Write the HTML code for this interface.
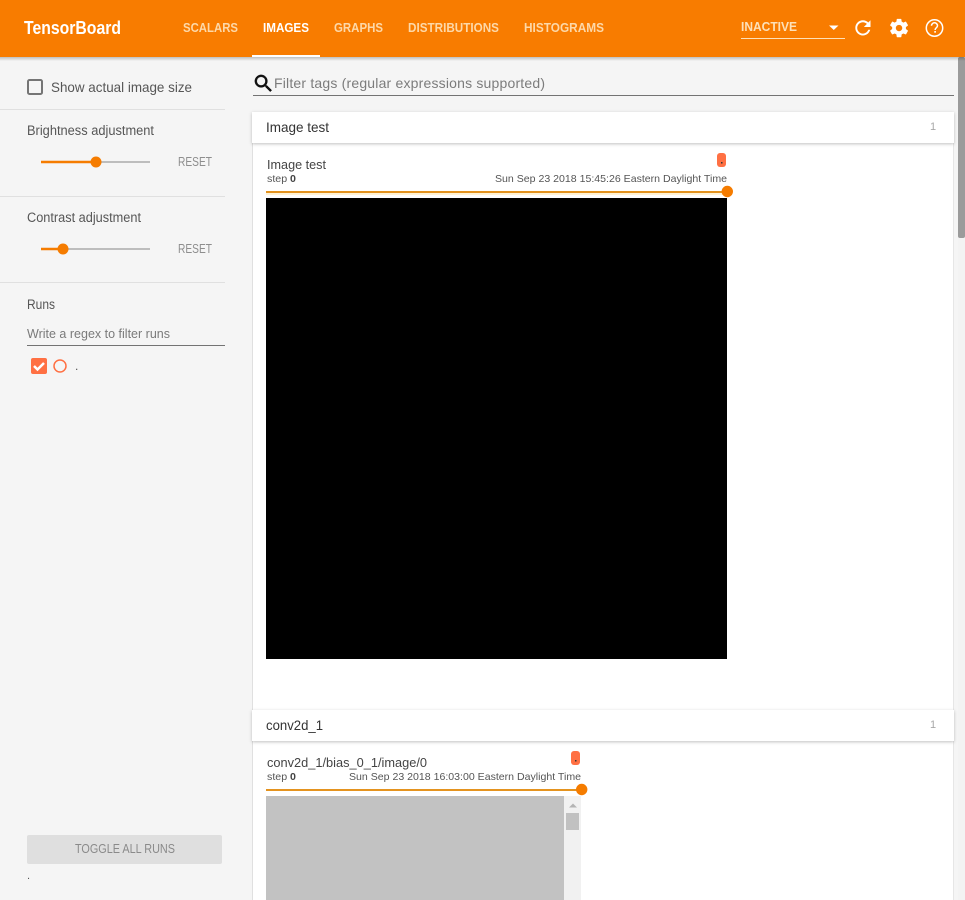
<!DOCTYPE html>
<html lang="en">
<head>
<meta charset="utf-8">
<title>TensorBoard</title>
<style>
html,body{margin:0;padding:0;width:965px;height:900px;overflow:hidden;background:#f5f5f5}
svg{display:block;position:absolute;left:0;top:0}
text{font-family:"Liberation Sans",sans-serif;white-space:pre}
.tab{font-size:13px;font-weight:bold;fill:#fdd8a8}
.lbl{font-size:13.500px;fill:#565656}
.rst{font-size:12.500px;fill:#8e8e8e}
.t{font-size:13px;fill:#444}
.s{font-size:10.500px;fill:#555}
</style>
</head>
<body>
<svg width="965" height="900" viewBox="0 0 965 900" xmlns="http://www.w3.org/2000/svg">
<defs>
<linearGradient id="hs" x1="0" y1="0" x2="0" y2="1"><stop offset="0" stop-color="#000" stop-opacity=".22"/><stop offset="1" stop-color="#000" stop-opacity="0"/></linearGradient>
<filter id="sh" x="-5%" y="-30%" width="110%" height="170%"><feDropShadow dx="0" dy="1" stdDeviation="1.500" flood-color="#000" flood-opacity=".25"/></filter>
</defs>

<rect width="965" height="900" fill="#f5f5f5"/>

<!-- main column -->
<rect x="252" y="143" width="702" height="757" fill="#fff"/>
<rect x="252" y="143" width="1" height="757" fill="#e0e0e0"/>
<rect x="953" y="143" width="1" height="757" fill="#e6e6e6"/>

<!-- page scrollbar -->
<rect x="958" y="57" width="7" height="843" fill="#f3f3f3"/>
<rect x="958" y="57" width="7" height="181" rx="2" fill="#9b9b9b"/>

<!-- header -->
<rect x="0" y="57" width="965" height="4" fill="url(#hs)"/>
<rect width="965" height="57" fill="#f87c00"/>
<text x="24" y="34" font-size="18" font-weight="bold" fill="#fff" textLength="97" lengthAdjust="spacingAndGlyphs">TensorBoard</text>
<text class="tab" x="183" y="32" textLength="55" lengthAdjust="spacingAndGlyphs">SCALARS</text>
<text class="tab" x="263" y="32" textLength="46" lengthAdjust="spacingAndGlyphs" style="fill:#fff">IMAGES</text>
<text class="tab" x="334" y="32" textLength="49" lengthAdjust="spacingAndGlyphs">GRAPHS</text>
<text class="tab" x="408" y="32" textLength="91" lengthAdjust="spacingAndGlyphs">DISTRIBUTIONS</text>
<text class="tab" x="524" y="32" textLength="80" lengthAdjust="spacingAndGlyphs">HISTOGRAMS</text>
<rect x="252" y="55" width="68" height="2" fill="#fff"/>
<text x="741" y="31" font-size="13" font-weight="bold" fill="#fde0b8" textLength="56" lengthAdjust="spacingAndGlyphs">INACTIVE</text>
<path d="M829 25.500h9.500l-4.750 4.500z" fill="#fff"/>
<rect x="741" y="38" width="104" height="1" fill="#fde0b8"/>
<g fill="#fff">
<path transform="translate(851.500 16.500) scale(.95)" d="M17.65 6.35C16.2 4.9 14.21 4 12 4c-4.42 0-7.99 3.58-7.99 8s3.57 8 7.99 8c3.73 0 6.84-2.55 7.73-6h-2.08c-.82 2.33-3.04 4-5.65 4-3.31 0-6-2.69-6-6s2.69-6 6-6c1.66 0 3.14.69 4.22 1.78L13 11h7V4l-2.35 2.35z"/>
<path transform="translate(888 17) scale(.92)" d="M19.43 12.98c.04-.32.07-.64.07-.98s-.03-.66-.07-.98l2.11-1.65c.19-.15.24-.42.12-.64l-2-3.46c-.12-.22-.39-.3-.61-.22l-2.49 1c-.52-.4-1.08-.73-1.69-.98l-.38-2.65C14.46 2.18 14.25 2 14 2h-4c-.25 0-.46.18-.49.42l-.38 2.65c-.61.25-1.17.59-1.69.98l-2.49-1c-.23-.09-.49 0-.61.22l-2 3.46c-.13.22-.07.49.12.64l2.11 1.65c-.04.32-.07.65-.07.98s.03.66.07.98l-2.11 1.65c-.19.15-.24.42-.12.64l2 3.46c.12.22.39.3.61.22l2.49-1c.52.4 1.08.73 1.69.98l.38 2.65c.03.24.24.42.49.42h4c.25 0 .46-.18.49-.42l.38-2.65c.61-.25 1.17-.59 1.69-.98l2.49 1c.23.09.49 0 .61-.22l2-3.46c.12-.22.07-.49-.12-.64l-2.11-1.65zM12 15.5c-1.93 0-3.5-1.57-3.5-3.5s1.57-3.5 3.5-3.5 3.5 1.57 3.5 3.5-1.57 3.5-3.5 3.5z"/>
</g>
<!-- help icon: thin ring and question mark -->
<circle cx="934.500" cy="28" r="8.200" fill="none" stroke="#fff" stroke-width="1.500"/>
<path d="M931.500 25.800a3 3 0 0 1 6 0c0 1.900-2.400 1.900-2.400 4.200" fill="none" stroke="#fff" stroke-width="1.500"/>
<rect x="934.300" y="31" width="1.600" height="1.700" fill="#fff"/>

<!-- sidebar -->
<rect x="28" y="80" width="14" height="14" rx="1.500" fill="none" stroke="#757575" stroke-width="2"/>
<text class="lbl" x="51" y="92" textLength="141" lengthAdjust="spacingAndGlyphs" style="font-size:14px">Show actual image size</text>
<rect x="0" y="109" width="225" height="1" fill="#e0e0e0"/>
<text class="lbl" x="27" y="135" textLength="127" lengthAdjust="spacingAndGlyphs">Brightness adjustment</text>
<rect x="41" y="161" width="109" height="2" fill="#bdbdbd"/>
<rect x="41" y="160.750" width="55" height="2.500" fill="#f57c00"/>
<circle cx="96" cy="162" r="5.500" fill="#f57c00"/>
<text class="rst" x="178" y="166" textLength="34" lengthAdjust="spacingAndGlyphs">RESET</text>
<rect x="0" y="196" width="225" height="1" fill="#e0e0e0"/>
<text class="lbl" x="27" y="222" textLength="114" lengthAdjust="spacingAndGlyphs">Contrast adjustment</text>
<rect x="41" y="248" width="109" height="2" fill="#bdbdbd"/>
<rect x="41" y="247.750" width="22" height="2.500" fill="#f57c00"/>
<circle cx="63" cy="249" r="5.500" fill="#f57c00"/>
<text class="rst" x="178" y="253" textLength="34" lengthAdjust="spacingAndGlyphs">RESET</text>
<rect x="0" y="282" width="225" height="1" fill="#e0e0e0"/>
<text class="lbl" x="27" y="309" textLength="28" lengthAdjust="spacingAndGlyphs" style="font-size:14px">Runs</text>
<text x="27" y="338" font-size="13" fill="#7a7a7a" textLength="143" lengthAdjust="spacingAndGlyphs">Write a regex to filter runs</text>
<rect x="27" y="345" width="198" height="1" fill="#737373"/>
<rect x="31" y="358" width="16" height="16" rx="2" fill="#ff7043"/>
<path d="M34 366l3.500 3.500 6.500-6.500" fill="none" stroke="#fff" stroke-width="2.500"/>
<circle cx="60" cy="366" r="6" fill="none" stroke="#ff7043" stroke-width="1.500"/>
<text x="75" y="370" font-size="12" fill="#555">.</text>
<rect x="27" y="835" width="195" height="29" rx="2" fill="#dfdfdf"/>
<text x="75" y="853" font-size="12.500" fill="#8a8a8a" textLength="100" lengthAdjust="spacingAndGlyphs">TOGGLE ALL RUNS</text>
<text x="27" y="879" font-size="11" fill="#555">.</text>

<!-- filter -->
<path transform="translate(252 72) scale(.96)" stroke="#111" stroke-width=".5" d="M15.500 14h-.79l-.28-.27C15.410 12.590 16 11.110 16 9.500 16 5.910 13.090 3 9.500 3S3 5.910 3 9.500 5.910 16 9.500 16c1.610 0 3.090-.59 4.230-1.570l.27.28v.79l5 4.990L20.490 19l-4.990-5zm-6 0C7.010 14 5 11.990 5 9.500S7.010 5 9.500 5 14 7.010 14 9.500 11.990 14 9.500 14z" fill="#111"/>
<text x="274" y="88" font-size="14" fill="#7c7c7c" textLength="271" lengthAdjust="spacing">Filter tags (regular expressions supported)</text>
<rect x="253" y="95" width="701" height="1" fill="#737373"/>

<!-- card 1 -->
<rect x="252" y="112" width="702" height="31" fill="#fff" filter="url(#sh)"/>
<text x="266" y="132" font-size="14" fill="#333" textLength="63" lengthAdjust="spacingAndGlyphs">Image test</text>
<text x="930" y="130" font-size="11" fill="#a8a8a8">1</text>
<text class="t" x="267" y="169" textLength="59" lengthAdjust="spacingAndGlyphs">Image test</text>
<text class="s" x="267" y="182" textLength="29" lengthAdjust="spacingAndGlyphs">step <tspan font-weight="bold" fill="#444">0</tspan></text>
<text class="s" x="495" y="182" textLength="232" lengthAdjust="spacingAndGlyphs">Sun Sep 23 2018 15:45:26 Eastern Daylight Time</text>
<rect x="717" y="153" width="9" height="14" rx="3" fill="#ff7043"/>
<rect x="721" y="162" width="1.500" height="1.500" fill="#333"/>
<rect x="266" y="191" width="461" height="2" fill="#e4931f"/>
<rect x="266" y="193" width="461" height="2" fill="#fff3d6"/>
<circle cx="727.300" cy="191.500" r="5.700" fill="#f57c00"/>
<rect x="266" y="198" width="461" height="461" fill="#000"/>

<!-- card 2 -->
<rect x="252" y="710" width="702" height="31" fill="#fff" filter="url(#sh)"/>
<text x="266" y="730" font-size="14" fill="#333" textLength="57" lengthAdjust="spacingAndGlyphs">conv2d_1</text>
<text x="930" y="728" font-size="11" fill="#a8a8a8">1</text>
<text class="t" x="267" y="767" textLength="160" lengthAdjust="spacingAndGlyphs">conv2d_1/bias_0_1/image/0</text>
<text class="s" x="267" y="780" textLength="29" lengthAdjust="spacingAndGlyphs">step <tspan font-weight="bold" fill="#444">0</tspan></text>
<text class="s" x="349" y="780" textLength="232" lengthAdjust="spacingAndGlyphs">Sun Sep 23 2018 16:03:00 Eastern Daylight Time</text>
<rect x="571" y="751" width="9" height="14" rx="3" fill="#ff7043"/>
<rect x="575" y="760" width="1.500" height="1.500" fill="#333"/>
<rect x="266" y="789" width="315" height="2" fill="#e4931f"/>
<circle cx="581.700" cy="789.500" r="5.700" fill="#f57c00"/>
<rect x="266" y="796" width="298" height="104" fill="#c2c2c2"/>
<rect x="564" y="796" width="17" height="104" fill="#f1f1f1"/>
<path d="M569 807.500l4-4 4 4z" fill="#b4b4b4"/>
<rect x="566" y="813" width="13" height="17" fill="#c1c1c1"/>
</svg>
</body>
</html>
